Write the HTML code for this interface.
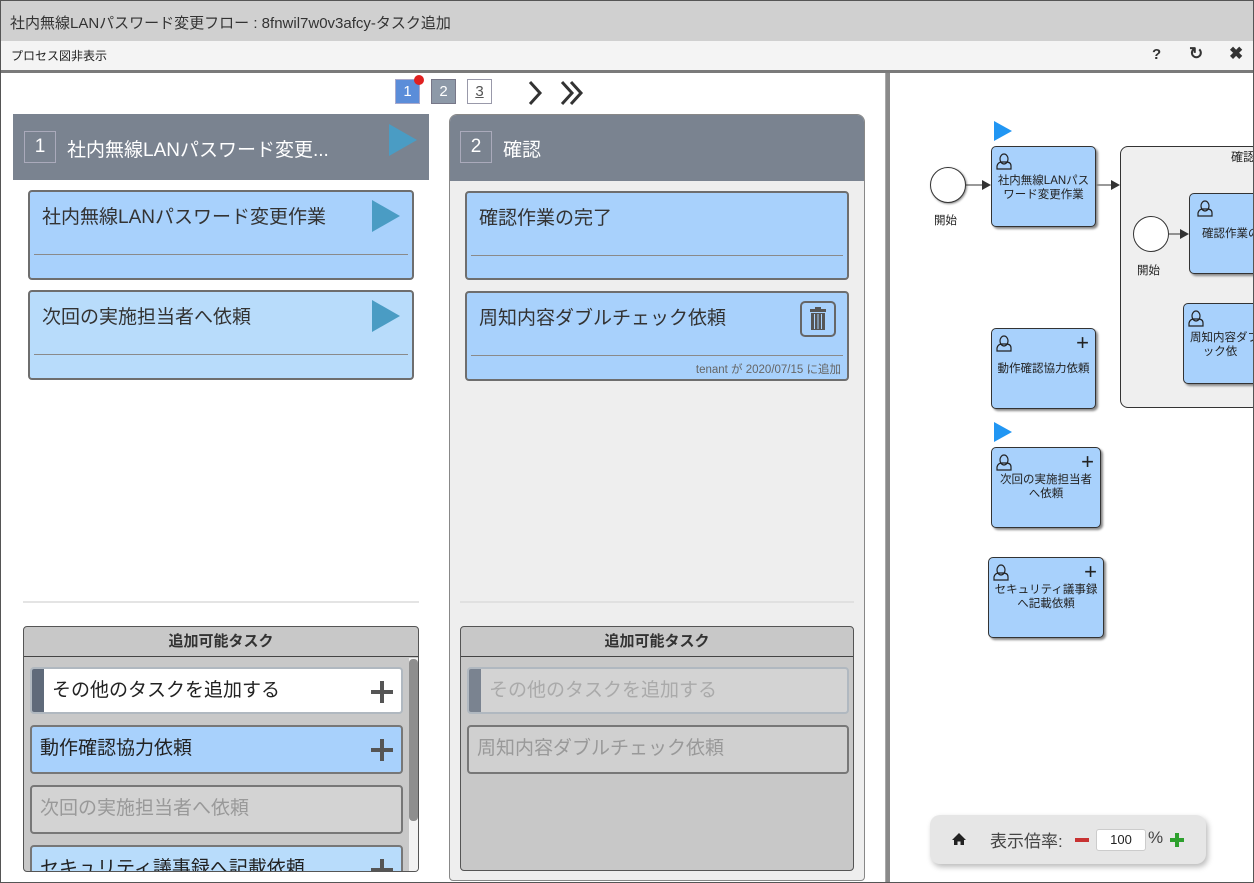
<!DOCTYPE html>
<html><head><meta charset="utf-8"><style>
*{box-sizing:border-box;margin:0;padding:0}
body{width:1254px;height:883px;overflow:hidden;font-family:"Liberation Sans","Noto Sans CJK JP",sans-serif;background:#fff;position:relative;color:#222}
.a{position:absolute;white-space:nowrap}
.card{position:absolute;border:2px solid #6e6e6e;border-radius:4px;background:#a8d1fc}
.card .t{position:absolute;left:12px;top:10px;font-size:19px;color:#333}
.card .ln{position:absolute;left:4px;right:4px;top:62px;border-top:1px solid #8a8a8a}
.tri{position:absolute;width:0;height:0;border-top:16px solid transparent;border-bottom:16px solid transparent;border-left:28px solid #4a9cc4}
.item{position:absolute;border:2px solid #777;border-radius:4px;font-size:19px;padding-left:8px;line-height:44px;overflow:hidden;white-space:nowrap}
.plus{position:absolute;right:8px;top:12px;width:22px;height:22px}
.plus:before{content:"";position:absolute;left:9px;top:0;width:4px;height:22px;background:#555}
.plus:after{content:"";position:absolute;top:9px;left:0;height:4px;width:22px;background:#555}
.task{position:absolute;border:1.5px solid #333;border-radius:5px;background:#a8d1fc;box-shadow:2px 2px 2px #888;font-size:11.5px;text-align:center;line-height:14px;color:#222;white-space:nowrap;overflow:hidden}
.task .p{position:absolute;right:6px;top:6px;font-size:22px;line-height:16px}
.btri{position:absolute;width:0;height:0;border-top:10px solid transparent;border-bottom:10px solid transparent;border-left:18px solid #2196f3}
</style></head><body>
<div class="a" style="left:0;top:0;width:1254px;height:883px;border:1px solid #555;z-index:9;pointer-events:none"></div>
<div class="a" style="left:0;top:0;width:1254px;height:41px;background:#d0d0d0"></div>
<div class="a" style="left:10px;top:12px;font-size:15px;color:#333">社内無線LANパスワード変更フロー : 8fnwil7w0v3afcy-タスク追加</div>
<div class="a" style="left:0;top:41px;width:1254px;height:32px;background:#f4f4f4;border-bottom:3px solid #7a7a7a"></div>
<div class="a" style="left:11px;top:47px;font-size:12px;color:#222">プロセス図非表示</div>
<div class="a" style="left:1152px;top:46px;font-size:15px;font-weight:bold;color:#333">?</div>
<div class="a" style="left:1189px;top:44px;font-size:17px;font-weight:bold;color:#333">↻</div>
<div class="a" style="left:1229px;top:44px;font-size:17px;font-weight:bold;color:#333">✖</div>
<!-- divider -->
<div class="a" style="left:885px;top:73px;width:5px;height:810px;background:#8a8a8a;border-left:1px solid #aaa"></div>
<!-- pager -->
<div class="a" style="left:395px;top:79px;width:25px;height:25px;background:#5b8dd9;border:1px solid #aac;color:#fff;font-size:15px;text-align:center;line-height:23px">1</div>
<div class="a" style="left:414px;top:75px;width:10px;height:10px;border-radius:50%;background:#e02020"></div>
<div class="a" style="left:431px;top:79px;width:25px;height:25px;background:#8d99a8;border:1px solid #778;color:#fff;font-size:15px;text-align:center;line-height:23px">2</div>
<div class="a" style="left:467px;top:79px;width:25px;height:25px;background:#fff;border:1px solid #99a;color:#555;font-size:15px;text-align:center;line-height:23px;text-decoration:underline">3</div>
<svg class="a" style="left:525px;top:80px" width="65" height="26"><path d="M5 2 L15 13 L5 24" fill="none" stroke="#333" stroke-width="3"/><path d="M37 2 L47 13 L37 24 M46 2 L56 13 L46 24" fill="none" stroke="#333" stroke-width="3"/></svg>
<!-- column 1 -->
<div class="a" style="left:13px;top:114px;width:416px;height:66px;background:#7a8390"></div>
<div class="a" style="left:24px;top:131px;width:32px;height:32px;border:1px solid #aab;color:#fff;font-size:19px;text-align:center;line-height:30px">1</div>
<div class="a" style="left:67px;top:135px;font-size:19px;color:#fff">社内無線LANパスワード変更...</div>
<div class="tri" style="left:389px;top:124px"></div>
<div class="card" style="left:28px;top:190px;width:386px;height:90px"><div class="t">社内無線LANパスワード変更作業</div><div class="ln"></div><div class="tri" style="left:342px;top:8px"></div></div>
<div class="card" style="left:28px;top:290px;width:386px;height:90px;background:#b8dcfb"><div class="t">次回の実施担当者へ依頼</div><div class="ln"></div><div class="tri" style="left:342px;top:8px"></div></div>
<div class="a" style="left:23px;top:601px;width:396px;height:2px;background:#e4e4e4"></div>
<div class="a" style="left:23px;top:626px;width:396px;height:246px;border:1px solid #555;border-radius:4px;background:#c8c8c8;overflow:hidden">
 <div class="a" style="left:0;top:0;width:394px;height:30px;border-bottom:1px solid #444;text-align:center;font-weight:bold;font-size:15px;line-height:30px;color:#333">追加可能タスク</div>
 <div class="a" style="left:385px;top:31px;width:10px;height:215px;background:#f2f2f2"></div>
 <div class="a" style="left:385px;top:32px;width:9px;height:162px;background:#8e8e8e;border-radius:4px"></div>
 <div class="item" style="left:6px;top:40px;width:373px;height:47px;background:#fff;border:2px solid #b0b8c0;padding-left:20px;color:#222"><div class="a" style="left:0;top:0;width:12px;height:43px;background:#5f6a7a"></div>その他のタスクを追加する<div class="plus"></div></div>
 <div class="item" style="left:6px;top:98px;width:373px;height:49px;background:#a8d1fc">動作確認協力依頼<div class="plus"></div></div>
 <div class="item" style="left:6px;top:158px;width:373px;height:49px;background:#d3d3d3;color:#999">次回の実施担当者へ依頼</div>
 <div class="item" style="left:6px;top:218px;width:373px;height:49px;background:#b8dcfb">セキュリティ議事録へ記載依頼<div class="plus"></div></div>
</div>
<!-- column 2 -->
<div class="a" style="left:449px;top:114px;width:416px;height:767px;background:#eeeeee;border:1px solid #888;border-radius:8px 8px 4px 4px;overflow:hidden">
 <div class="a" style="left:0;top:0;width:416px;height:66px;background:#7a8390"></div>
</div>
<div class="a" style="left:460px;top:131px;width:32px;height:32px;border:1px solid #aab;color:#fff;font-size:19px;text-align:center;line-height:30px">2</div>
<div class="a" style="left:503px;top:135px;font-size:19px;color:#fff">確認</div>
<div class="card" style="left:465px;top:191px;width:384px;height:89px"><div class="t">確認作業の完了</div><div class="ln"></div></div>
<div class="card" style="left:465px;top:291px;width:384px;height:90px"><div class="t">周知内容ダブルチェック依頼</div><div class="ln"></div>
 <div class="a" style="left:333px;top:8px;width:36px;height:36px;border:2px solid #666;border-radius:5px">
  <svg width="32" height="32"><rect x="8" y="6" width="16" height="3" fill="#555"/><rect x="13" y="4" width="6" height="3" fill="#555"/><rect x="9" y="10" width="14" height="17" fill="#555"/><path d="M12.5 11v15M16 11v15M19.5 11v15" stroke="#a8d1fc" stroke-width="1"/></svg></div>
 <div class="a" style="right:6px;top:68px;font-size:11.5px;color:#666">tenant が 2020/07/15 に追加</div></div>
<div class="a" style="left:460px;top:601px;width:394px;height:2px;background:#e0e0e0"></div>
<div class="a" style="left:460px;top:626px;width:394px;height:245px;border:1px solid #555;border-radius:4px;background:#c8c8c8;overflow:hidden">
 <div class="a" style="left:0;top:0;width:392px;height:30px;border-bottom:1px solid #444;text-align:center;font-weight:bold;font-size:15px;line-height:30px;color:#333">追加可能タスク</div>
 <div class="item" style="left:6px;top:40px;width:382px;height:47px;background:#d3d3d3;border:2px solid #b0b8c0;padding-left:20px;color:#aaa"><div class="a" style="left:0;top:0;width:12px;height:43px;background:#7a8390"></div>その他のタスクを追加する</div>
 <div class="item" style="left:6px;top:98px;width:382px;height:49px;background:#d0d0d0;color:#999">周知内容ダブルチェック依頼</div>
</div>
<!-- diagram -->
<div class="a" style="left:930px;top:167px;width:36px;height:36px;border:1.5px solid #333;border-radius:50%;background:#fff;box-shadow:1px 1px 2px #888"></div>
<div class="a" style="left:934px;top:212px;font-size:11.5px">開始</div>
<svg class="a" style="left:966px;top:176px" width="160" height="20"><path d="M0 9H17" stroke="#333"/><path d="M16 4L25 9L16 14Z" fill="#333"/><path d="M130 9H146" stroke="#333"/><path d="M145 4L154 9L145 14Z" fill="#333"/></svg>
<div class="btri" style="left:994px;top:121px"></div>
<div class="task" style="left:991px;top:146px;width:105px;height:81px"><div style="padding-top:27px">社内無線LANパス<br>ワード変更作業</div></div>
<div class="a" style="left:1120px;top:146px;width:140px;height:262px;border:1.5px solid #333;border-radius:8px;background:#efefef"></div>
<div class="a" style="left:1231px;top:148px;font-size:12px">確認</div>
<div class="a" style="left:1133px;top:216px;width:36px;height:36px;border:1.5px solid #333;border-radius:50%;background:#fff"></div>
<div class="a" style="left:1137px;top:262px;font-size:11.5px">開始</div>
<svg class="a" style="left:1169px;top:226px" width="22" height="16"><path d="M0 8H12" stroke="#333"/><path d="M11 3L20 8L11 13Z" fill="#333"/></svg>
<div class="task" style="left:1189px;top:193px;width:80px;height:81px;text-align:left"><div style="padding:33px 0 0 12px">確認作業の</div></div>
<div class="task" style="left:1183px;top:303px;width:80px;height:81px;text-align:left"><div style="padding:27px 0 0 6px">周知内容ダブ<br>&nbsp;&nbsp;&nbsp;&nbsp;ック依</div></div>
<div class="task" style="left:991px;top:328px;width:105px;height:81px"><span class="p">+</span><div style="padding-top:33px">動作確認協力依頼</div></div>
<div class="btri" style="left:994px;top:422px"></div>
<div class="task" style="left:991px;top:447px;width:110px;height:81px"><span class="p">+</span><div style="padding-top:25px">次回の実施担当者<br>へ依頼</div></div>
<div class="task" style="left:988px;top:557px;width:116px;height:81px"><span class="p">+</span><div style="padding-top:25px">セキュリティ議事録<br>へ記載依頼</div></div>
<svg class="a" style="left:994px;top:150px" width="20" height="20"><path d="M6 9a4 5 0 1 1 8 0a4 5 0 1 1-8 0M3 19v-3q1-4 5-4h4q5 0 5 4v3z" fill="none" stroke="#222" stroke-width="1.2"/></svg>
<svg class="a" style="left:1195px;top:197px" width="20" height="20"><path d="M6 9a4 5 0 1 1 8 0a4 5 0 1 1-8 0M3 19v-3q1-4 5-4h4q5 0 5 4v3z" fill="none" stroke="#222" stroke-width="1.2"/></svg>
<svg class="a" style="left:1186px;top:307px" width="20" height="20"><path d="M6 9a4 5 0 1 1 8 0a4 5 0 1 1-8 0M3 19v-3q1-4 5-4h4q5 0 5 4v3z" fill="none" stroke="#222" stroke-width="1.2"/></svg>
<svg class="a" style="left:994px;top:332px" width="20" height="20"><path d="M6 9a4 5 0 1 1 8 0a4 5 0 1 1-8 0M3 19v-3q1-4 5-4h4q5 0 5 4v3z" fill="none" stroke="#222" stroke-width="1.2"/></svg>
<svg class="a" style="left:994px;top:451px" width="20" height="20"><path d="M6 9a4 5 0 1 1 8 0a4 5 0 1 1-8 0M3 19v-3q1-4 5-4h4q5 0 5 4v3z" fill="none" stroke="#222" stroke-width="1.2"/></svg>
<svg class="a" style="left:991px;top:561px" width="20" height="20"><path d="M6 9a4 5 0 1 1 8 0a4 5 0 1 1-8 0M3 19v-3q1-4 5-4h4q5 0 5 4v3z" fill="none" stroke="#222" stroke-width="1.2"/></svg>
<!-- zoom ctrl -->
<div class="a" style="left:930px;top:815px;width:276px;height:49px;background:#e6e6e6;border-radius:10px;box-shadow:2px 3px 6px #bbb"></div>
<svg class="a" style="left:951px;top:832px" width="16" height="14"><path d="M8 1L15 8H13V13H9.5V9.5H6.5V13H3V8H1Z" fill="#222"/></svg>
<div class="a" style="left:990px;top:827px;font-size:17px;color:#444">表示倍率:</div>
<div class="a" style="left:1075px;top:838px;width:14px;height:4px;background:#c83232"></div>
<div class="a" style="left:1096px;top:829px;width:50px;height:22px;background:#fff;border:1px solid #ccc;border-radius:3px;font-size:13px;text-align:center;line-height:20px">100</div>
<div class="a" style="left:1148px;top:828px;font-size:17px;color:#444">%</div>
<div class="a" style="left:1170px;top:838px;width:14px;height:4px;background:#2ea02e"></div>
<div class="a" style="left:1175px;top:833px;width:4px;height:14px;background:#2ea02e"></div>
</body></html>
